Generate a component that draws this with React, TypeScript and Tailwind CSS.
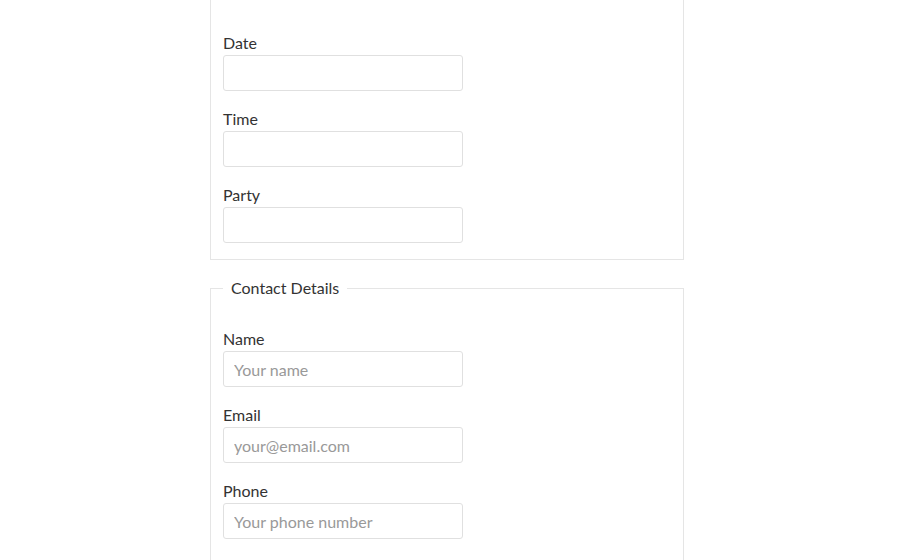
const inputClass =
    "block w-[240px] h-9 border border-[#e0e0e0] rounded-[3px] px-[10px] text-[16px] text-[#333] placeholder:text-[#999] bg-white outline-none"

function Field({ label, placeholder, type = "text" }: { label: string; placeholder?: string; type?: string }) {
    return (
        <div className="mb-5 last:mb-0">
            <label className="block text-[16px] leading-4 mb-1 text-[#333]">{label}</label>
            <input type={type} placeholder={placeholder} className={inputClass} />
        </div>
    )
}

export default function App() {
    return (
        <div className="h-[560px] bg-white overflow-hidden" style={{ fontFamily: "Lato, 'Open Sans', sans-serif" }}>
            <div className="ml-[210px] w-[474px]">
                <fieldset className="border border-t-0 border-[#e5e5e5] px-3 pt-[35px] pb-4">
                    <Field label="Date" />
                    <Field label="Time" />
                    <Field label="Party" />
                </fieldset>

                <fieldset className="mt-[18px] border border-[#e5e5e5] px-3 pt-[33px] pb-10">
                    <legend className="px-2 text-[16px] leading-5 text-[#333]">Contact Details</legend>
                    <Field label="Name" placeholder="Your name" />
                    <Field label="Email" placeholder="your@email.com" type="email" />
                    <Field label="Phone" placeholder="Your phone number" type="tel" />
                </fieldset>
            </div>
        </div>
    )
}
